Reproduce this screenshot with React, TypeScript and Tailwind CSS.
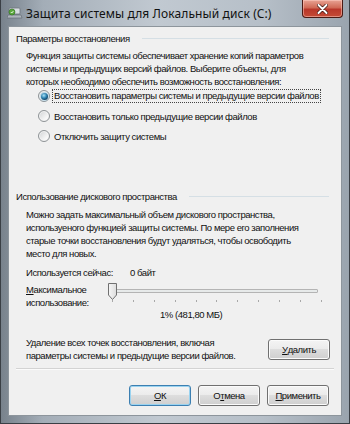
import React from 'react';

const font = { fontFamily: '"Liberation Sans", Arial, sans-serif' };
const titleFont = { fontFamily: '"Noto Sans", "Open Sans", sans-serif' };

function Radio({ checked }: { checked?: boolean }) {
  return (
    <div className="w-[12px] h-[12px] rounded-full border border-[#8e9396] bg-[linear-gradient(135deg,#cfd2d4,#f7f7f7_70%)] flex items-center justify-center shrink-0 shadow-[inset_0_0_0_1px_#f4f4f4]">
      {checked && (
        <div className="w-[7px] h-[7px] rounded-full bg-[radial-gradient(circle_at_40%_35%,#a8e2f7,#2a7fae_45%,#0d3553_80%)] shadow-[0_0_2px_#4fb3e6]" />
      )}
    </div>
  );
}

function WinButton({ children, primary }: { children: React.ReactNode; primary?: boolean }) {
  return (
    <div
      className={`w-[62px] h-[21px] rounded-[3px] border flex items-center justify-center text-[#111] bg-[linear-gradient(to_bottom,#f4f4f4,#ebebeb_48%,#dddddd_50%,#cfcfcf)] ${
        primary
          ? 'border-[#3c7fb1] shadow-[inset_0_0_0_1px_#9ad3f0]'
          : 'border-[#707070] shadow-[inset_0_0_0_1px_#fbfbfb]'
      }`}
    >
      {children}
    </div>
  );
}

function GroupHeader({ title }: { title: string }) {
  return (
    <div className="flex items-center pl-[7px] pr-[12px] leading-[13px]">
      <span>{title}</span>
      <div className="flex-1 h-px bg-[#d5dfe5] ml-[12px]" />
    </div>
  );
}

function Slider() {
  const ticks = Array.from({ length: 11 }, (_, i) => i);
  return (
    <div className="relative w-[216px] h-[26px]">
      <div className="absolute left-[8px] right-[6px] top-[6px] h-[4px] border border-[#b4b4b4] bg-[#e7eaea] rounded-[1px]" />
      <div className="absolute left-[4px] right-[2px] top-[17px] flex justify-between">
        {ticks.map((t) => (
          <div key={t} className="w-px h-[2px] bg-[#a8a8a8]" />
        ))}
      </div>
      <svg className="absolute left-[-1px] top-[-1px]" width="11" height="19" viewBox="0 0 11 19">
        <defs>
          <linearGradient id="thumb" x1="0" y1="0" x2="1" y2="0">
            <stop offset="0" stopColor="#f6f6f6" />
            <stop offset="1" stopColor="#dcdcdc" />
          </linearGradient>
        </defs>
        <path d="M1.5 1.5 H9.5 V13 L5.5 17.5 L1.5 13 Z" fill="url(#thumb)" stroke="#707070" strokeWidth="1" />
      </svg>
    </div>
  );
}

export default function App() {
  return (
    <div
      style={font}
      className="w-[350px] h-[424px] flex flex-col overflow-hidden border-l border-r border-b border-[#3a3f45] bg-[linear-gradient(to_right,#78828c,#a3adb7_12%,#c1c9d1_45%,#b6bfc8_75%,#9aa4ae)]"
    >
      {/* Title bar */}
      <div className="relative h-[25px] shrink-0 flex items-center pl-[6px]">
        <svg width="16" height="14" viewBox="0 0 16 14" className="mr-[3px]">
          <rect x="2" y="2" width="11" height="6" rx="1" fill="#d8dde2" stroke="#6c747c" strokeWidth="0.8" />
          <path d="M1 9 H14 L15 12 H0 Z" fill="#aeb5bc" stroke="#5e666e" strokeWidth="0.6" />
          <circle cx="5" cy="6" r="3" fill="#5aa83c" stroke="#2f6e1e" strokeWidth="0.6" />
          <path d="M3.8 6 L4.8 7 L6.4 5" fill="none" stroke="#fff" strokeWidth="0.8" />
        </svg>
        <span style={titleFont} className="text-[12px] text-[#111] tracking-[0.1px] mt-[2px]">
          Защита системы для Локальный диск (C:)
        </span>
        <div className="absolute right-[6px] top-0 w-[41px] h-[18px] rounded-b-[4px] border border-t-0 border-[#4a1a14] bg-[linear-gradient(to_bottom,#e8a394,#d06a56_45%,#b9372a_55%,#c44b36)] shadow-[inset_0_0_0_1px_rgba(255,210,200,0.5)] flex items-center justify-center">
          <svg width="11" height="10" viewBox="0 0 11 10">
            <path d="M1.5 1 L9.5 9 M9.5 1 L1.5 9" stroke="#3a0f0a" strokeWidth="3.4" strokeLinecap="round" />
            <path d="M1.5 1 L9.5 9 M9.5 1 L1.5 9" stroke="#ffffff" strokeWidth="2" strokeLinecap="round" />
          </svg>
        </div>
      </div>

      {/* Client area */}
      <div className="flex-1 mx-[7px] mb-[7px] mt-px border border-[#8d959c] bg-[#f0f0f0] flex flex-col text-[9.5px] tracking-[-0.45px] leading-[13px] text-[#111] whitespace-nowrap">
        <div className="pt-[5px]">
          <GroupHeader title="Параметры восстановления" />
        </div>
        <p className="mt-[4px] pl-[17px] pr-[12px]">
          Функция защиты системы обеспечивает хранение копий параметров
          <br />
          системы и предыдущих версий файлов. Выберите объекты, для
          <br />
          которых необходимо обеспечить возможность восстановления:
        </p>
        <div className="mt-[-2px] flex flex-col pl-[29px]">
          <div className="h-[20px] flex items-center">
            <Radio checked />
            <span className="ml-[2px] px-px border border-dotted border-[#444] leading-[12px]">
              Восстановить параметры системы и предыдущие версии файлов
            </span>
          </div>
          <div className="h-[20px] flex items-center">
            <Radio />
            <span className="ml-[3px] px-px">Восстановить только предыдущие версии файлов</span>
          </div>
          <div className="h-[20px] flex items-center">
            <Radio />
            <span className="ml-[3px] px-px">Отключить защиту системы</span>
          </div>
        </div>

        <div className="mt-[44px]">
          <GroupHeader title="Использование дискового пространства" />
        </div>
        <p className="mt-[5px] pl-[17px] pr-[12px]">
          Можно задать максимальный объем дискового пространства,
          <br />
          используеного функцией защиты системы. По мере его заполнения
          <br />
          старые точки восстановления будут удаляться, чтобы освободить
          <br />
          место для новых.
        </p>
        <div className="mt-[6px] pl-[17px] flex">
          <span className="w-[104px]">Используется сейчас:</span>
          <span>0 байт</span>
        </div>
        <div className="mt-[4px] pl-[17px] flex">
          <div className="w-[82px]">
            <div>
              <span className="underline">М</span>аксимальное
            </div>
            <div>использование:</div>
          </div>
          <Slider />
        </div>
        <div className="mt-[-1px] pl-[151px]">1% (481,80 МБ)</div>

        <div className="mt-[15px] pl-[17px] pr-[11px] flex items-center justify-between">
          <div>
            <div>Удаление всех точек восстановления, включая</div>
            <div>параметры системы и предыдущие версии файлов.</div>
          </div>
          <WinButton>
            <span className="underline">У</span>далить
          </WinButton>
        </div>

        <div className="mt-[6px] mx-[7px] h-px bg-[#d3d3d3] shadow-[0_1px_0_#fbfbfb]" />

        <div className="mt-[16px] pr-[12px] flex justify-end gap-[7px]">
          <WinButton primary>
            <span className="underline">О</span>К
          </WinButton>
          <WinButton>
            О<span className="underline">т</span>мена
          </WinButton>
          <WinButton>
            <span className="underline">П</span>рименить
          </WinButton>
        </div>
      </div>
    </div>
  );
}
